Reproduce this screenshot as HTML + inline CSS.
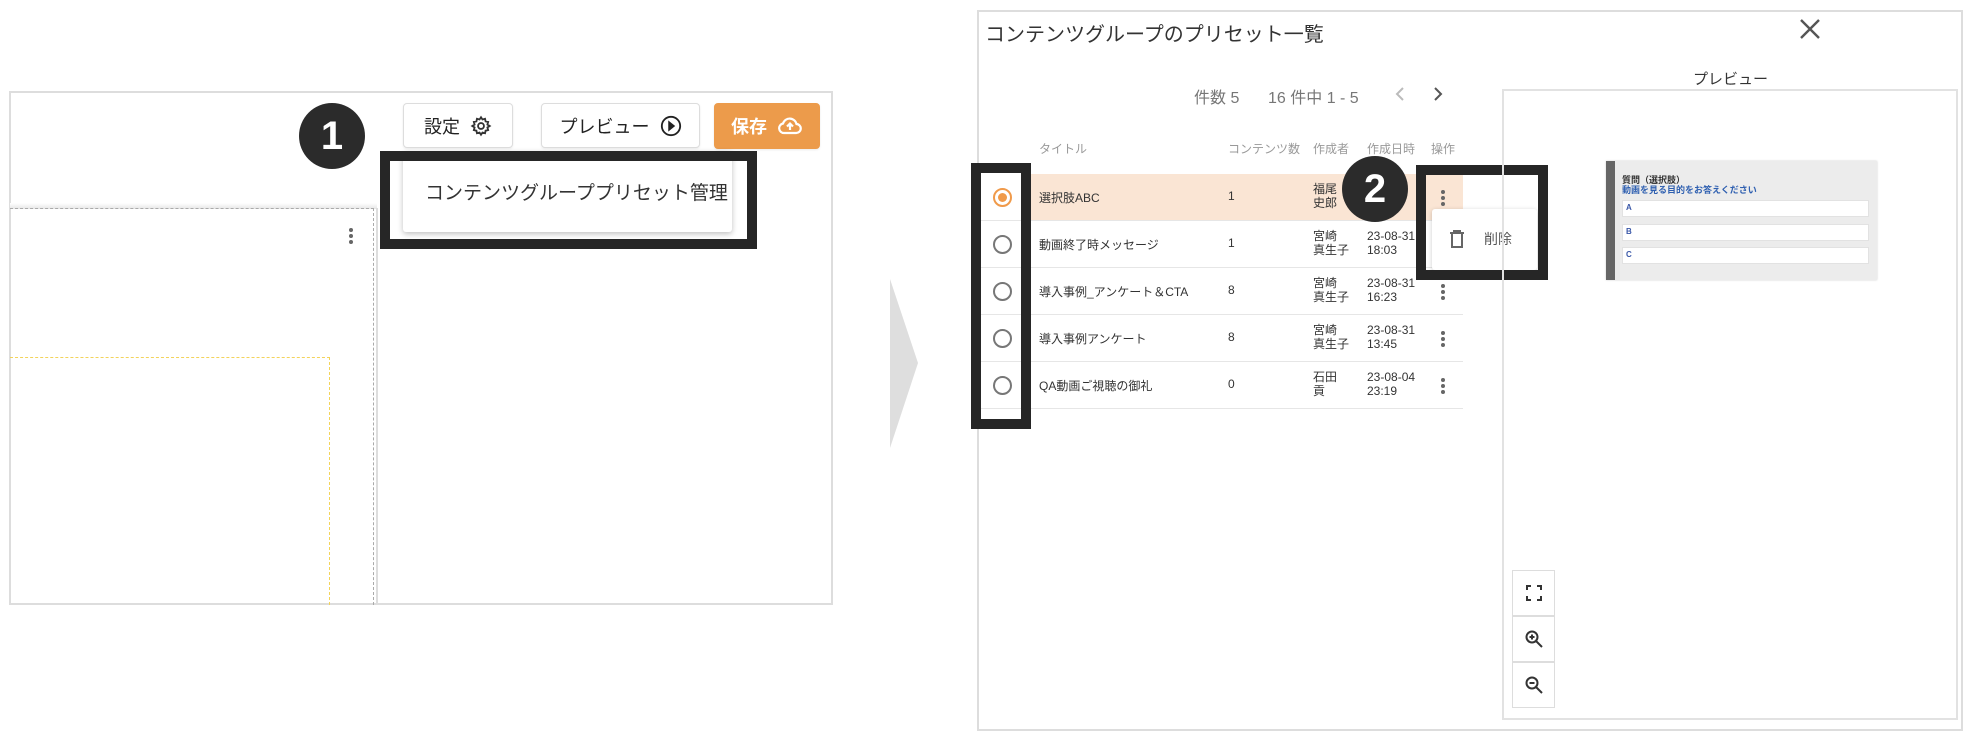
<!DOCTYPE html>
<html><head><meta charset="utf-8"><style>
*{margin:0;padding:0;box-sizing:border-box}
body{width:1972px;height:742px;background:#fff;position:relative;overflow:hidden;font-family:"Liberation Sans","Noto Sans CJK JP",sans-serif;color:#333}
.a{position:absolute}
.btn{position:absolute;border:1px solid #ddd;border-radius:4px;background:#fff;box-shadow:0 1px 2px rgba(0,0,0,.08);display:flex;align-items:center;justify-content:center;font-size:18px;color:#222;gap:10px}
.circ{position:absolute;border-radius:50%;background:#2b2b2b;color:#fff;font-weight:bold;font-size:40px;display:flex;align-items:center;justify-content:center}
.bb{position:absolute;border:10px solid #262626}
.row{position:absolute;left:981px;width:482px;height:47px;border-bottom:1px solid #e6e6e6;font-size:12px;color:#333}
.row span{position:absolute}
.radio{position:absolute;left:993px;width:19px;height:19px;border:2px solid #777;border-radius:50%;background:#fff}
.keb{position:absolute;left:1441px;width:4px}
.keb i{display:block;width:4px;height:4px;border-radius:50%;background:#666;margin-bottom:2px}
.hd{position:absolute;top:140px;font-size:12px;color:#999}
.opt{position:absolute;left:1622px;width:247px;height:17px;background:#fff;border:1px solid #e2e2e2;font-size:8px;color:#3957a8;font-weight:bold;padding:2px 3px}
.zc{position:absolute;left:1512px;width:43px;height:46px;border:1px solid #ddd;background:#fff;display:flex;align-items:center;justify-content:center}
</style></head><body>
<!-- left panel -->
<div class="a" style="left:9px;top:91px;width:824px;height:514px;border:2px solid #ddd"></div>
<div class="a" style="left:10px;top:203px;width:367px;height:6px;background:linear-gradient(#fff,#e6e6e6)"></div>
<div class="a" style="left:10px;top:208px;width:364px;height:397px;border-top:1px dashed #aaa;border-right:1px dashed #aaa"></div>
<div class="a" style="left:376px;top:208px;width:2px;height:397px;background:#ddd"></div>
<div class="a" style="left:10px;top:357px;width:320px;height:248px;border-top:1px dashed #f3d35a;border-right:1px dashed #f3d35a"></div>
<div class="keb" style="left:349px;top:228px"><i></i><i></i><i></i></div>
<div class="circ" style="left:299px;top:103px;width:66px;height:66px">1</div>
<div class="btn" style="left:403px;top:103px;width:110px;height:45px">設定
<svg width="22" height="22" viewBox="0 0 24 24" fill="none" stroke="#333" stroke-width="2"><circle cx="12" cy="12" r="3.2"/><path d="M12 2.5l1.6 2.4 2.8-.8.6 2.8 2.8.7-.8 2.8L21.5 12l-2.5 1.6.8 2.8-2.8.7-.6 2.8-2.8-.8L12 21.5l-1.6-2.4-2.8.8-.6-2.8-2.8-.7.8-2.8L2.5 12 5 10.4l-.8-2.8 2.8-.7.6-2.8 2.8.8z"/></svg></div>
<div class="btn" style="left:541px;top:103px;width:159px;height:45px">プレビュー
<svg width="22" height="22" viewBox="0 0 24 24" fill="none" stroke="#222" stroke-width="2"><circle cx="12" cy="12" r="10"/><path d="M10 8l5 4-5 4z" fill="#222"/></svg></div>
<div class="btn" style="left:714px;top:103px;width:106px;height:46px;background:#ec9b4b;border-color:#ec9b4b;color:#fff;font-weight:bold">保存
<svg width="26" height="22" viewBox="0 0 26 22" fill="none" stroke="#fff" stroke-width="2.2"><path d="M7 18h12a4.5 4.5 0 0 0 .5-9A7 7 0 0 0 6 8.5 4.8 4.8 0 0 0 7 18z"/><path d="M13 15V9M10 11.5l3-3 3 3"/></svg></div>
<div class="a" style="left:403px;top:151px;width:329px;height:81px;background:#fff;border-radius:3px;box-shadow:0 2px 6px rgba(0,0,0,.25)"></div>
<div class="a" style="left:425px;top:178px;font-size:19px;color:#333">コンテンツグループプリセット管理</div>
<div class="bb" style="left:380px;top:151px;width:377px;height:98px"></div>
<!-- arrow -->
<svg class="a" style="left:890px;top:279px" width="30" height="170"><path d="M0 0L28 84 0 169z" fill="#dedede"/></svg>
<!-- dialog -->
<div class="a" style="left:977px;top:10px;width:986px;height:721px;border:2px solid #ddd"></div>
<div class="a" style="left:985px;top:18px;font-size:20px;color:#333">コンテンツグループのプリセット一覧</div>
<svg class="a" style="left:1799px;top:18px" width="22" height="22" viewBox="0 0 22 22" stroke="#555" stroke-width="2.4"><path d="M2 2l18 18M20 2L2 20"/></svg>
<div class="a" style="left:1194px;top:84px;font-size:16px;color:#777">件数 5</div>
<div class="a" style="left:1268px;top:84px;font-size:16px;color:#777">16 件中 1 - 5</div>
<svg class="a" style="left:1394px;top:86px" width="12" height="16" viewBox="0 0 12 16" fill="none" stroke="#bbb" stroke-width="2"><path d="M9 2L3 8l6 6"/></svg>
<svg class="a" style="left:1432px;top:86px" width="12" height="16" viewBox="0 0 12 16" fill="none" stroke="#555" stroke-width="2"><path d="M3 2l6 6-6 6"/></svg>
<div class="hd" style="left:1039px">タイトル</div>
<div class="hd" style="left:1228px">コンテンツ数</div>
<div class="hd" style="left:1313px">作成者</div>
<div class="hd" style="left:1367px">作成日時</div>
<div class="hd" style="left:1431px">操作</div>
<div class="row" style="top:174px;background:linear-gradient(90deg,#fff 50px,#fae5d4 50px)"><span style="left:58px;top:15px">選択肢ABC</span><span style="left:247px;top:15px">1</span><span style="left:332px;top:8px;line-height:14px">福尾<br>史郎</span><span style="left:386px;top:8px">2</span></div>
<div class="row" style="top:221px"><span style="left:58px;top:15px">動画終了時メッセージ</span><span style="left:247px;top:15px">1</span><span style="left:332px;top:8px;line-height:14px">宮崎<br>真生子</span><span style="left:386px;top:8px;line-height:14px">23-08-31<br>18:03</span></div>
<div class="row" style="top:268px"><span style="left:58px;top:15px">導入事例_アンケート＆CTA</span><span style="left:247px;top:15px">8</span><span style="left:332px;top:8px;line-height:14px">宮崎<br>真生子</span><span style="left:386px;top:8px;line-height:14px">23-08-31<br>16:23</span></div>
<div class="row" style="top:315px"><span style="left:58px;top:15px">導入事例アンケート</span><span style="left:247px;top:15px">8</span><span style="left:332px;top:8px;line-height:14px">宮崎<br>真生子</span><span style="left:386px;top:8px;line-height:14px">23-08-31<br>13:45</span></div>
<div class="row" style="top:362px"><span style="left:58px;top:15px">QA動画ご視聴の御礼</span><span style="left:247px;top:15px">0</span><span style="left:332px;top:8px;line-height:14px">石田<br>貢</span><span style="left:386px;top:8px;line-height:14px">23-08-04<br>23:19</span></div>
<div class="radio" style="top:188px;border-color:#f09a4a"><div style="margin:3px;width:9px;height:9px;border-radius:50%;background:#f09a4a"></div></div>
<div class="radio" style="top:235px"></div>
<div class="radio" style="top:282px"></div>
<div class="radio" style="top:329px"></div>
<div class="radio" style="top:376px"></div>
<div class="keb" style="top:190px"><i></i><i></i><i></i></div>
<div class="keb" style="top:284px"><i></i><i></i><i></i></div>
<div class="keb" style="top:331px"><i></i><i></i><i></i></div>
<div class="keb" style="top:378px"><i></i><i></i><i></i></div>
<div class="bb" style="left:971px;top:163px;width:60px;height:266px"></div>
<div class="circ" style="left:1342px;top:156px;width:66px;height:66px">2</div>
<!-- delete menu -->
<div class="a" style="left:1432px;top:209px;width:105px;height:61px;background:#fff;border-radius:3px;box-shadow:0 1px 5px rgba(0,0,0,.2)"></div>
<svg class="a" style="left:1449px;top:229px" width="16" height="20" viewBox="0 0 16 20" fill="none" stroke="#666" stroke-width="2"><path d="M1 4h14M5 4V2h6v2M3 5v13h10V5"/></svg>
<div class="a" style="left:1484px;top:229px;font-size:14px;color:#555">削除</div>
<div class="bb" style="left:1416px;top:165px;width:132px;height:115px"></div>
<!-- preview -->
<div class="a" style="left:1693px;top:68px;font-size:15px;color:#333">プレビュー</div>
<div class="a" style="left:1502px;top:89px;width:456px;height:631px;border:2px solid #e2e2e2"></div>
<div class="a" style="left:1606px;top:161px;width:271px;height:119px;background:#ececec;border-left:9px solid #666;box-shadow:0 0 2px rgba(0,0,0,.2)"></div>
<div class="a" style="left:1622px;top:173px;font-size:9px;font-weight:bold;color:#333">質問（選択肢）</div>
<div class="a" style="left:1622px;top:183px;font-size:9px;font-weight:bold;color:#2e5fb0">動画を見る目的をお答えください</div>
<div class="opt" style="top:200px">A</div>
<div class="opt" style="top:224px">B</div>
<div class="opt" style="top:247px">C</div>
<div class="zc" style="top:570px"><svg width="16" height="16" viewBox="0 0 16 16" fill="none" stroke="#333" stroke-width="2"><path d="M1 5V1h4M11 1h4v4M15 11v4h-4M5 15H1v-4"/></svg></div>
<div class="zc" style="top:616px"><svg width="18" height="18" viewBox="0 0 18 18" fill="none" stroke="#333" stroke-width="2"><circle cx="7" cy="7" r="5.5"/><path d="M11 11l6 6M7 4.5v5M4.5 7h5"/></svg></div>
<div class="zc" style="top:662px"><svg width="18" height="18" viewBox="0 0 18 18" fill="none" stroke="#333" stroke-width="2"><circle cx="7" cy="7" r="5.5"/><path d="M11 11l6 6M4.5 7h5"/></svg></div>
</body></html>
